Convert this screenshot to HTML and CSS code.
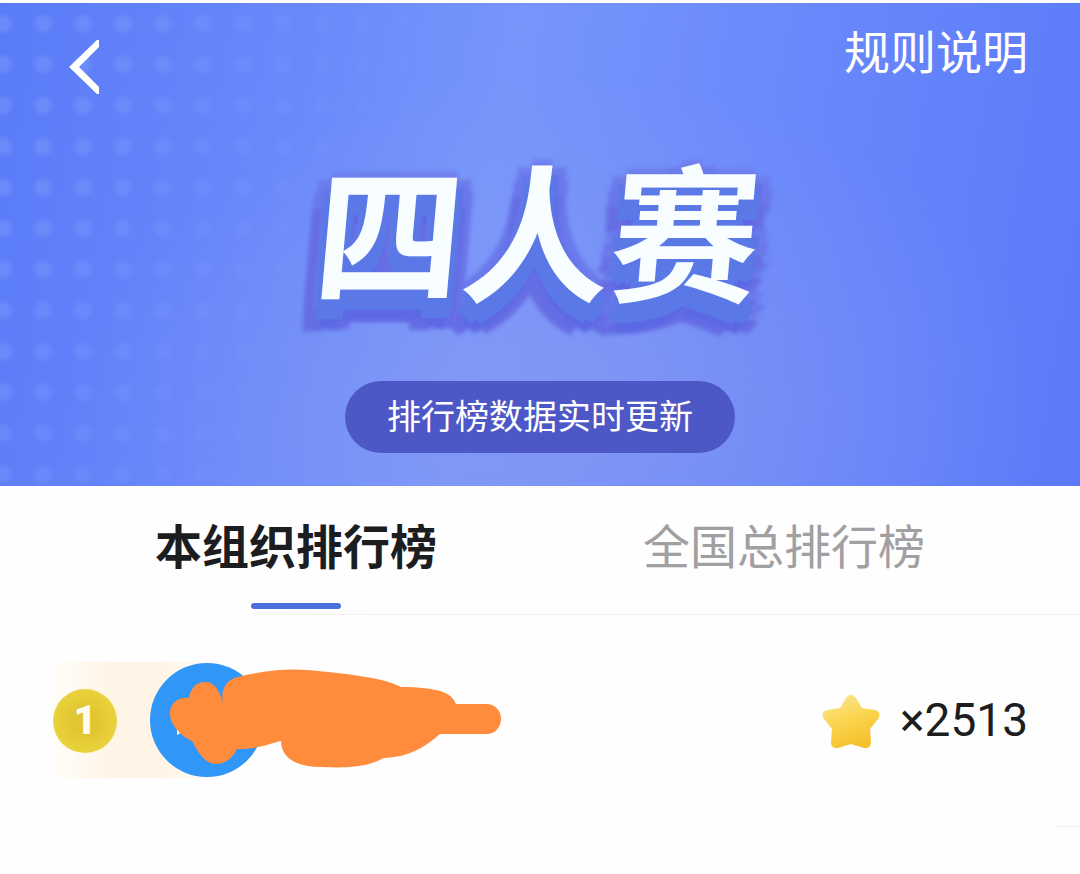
FILE: index.html
```
<!DOCTYPE html>
<html lang="zh-CN">
<head>
  <meta charset="UTF-8">
  <meta name="viewport" content="width=device-width, initial-scale=1">
  <title>四人赛</title>
  <link rel="stylesheet" href="styles.css">
</head>
<body>
  <header class="hero">
    <div class="dots"></div>
    <div class="topbar">
      <button class="back" type="button" aria-label="返回">
        <svg width="32" height="56" viewBox="0 0 32 56"><path d="M31 1v7L11 28l20 20v7h-2L1 28 29 1z" fill="#fff"/></svg>
      </button>
      <a class="rules" href="#">规则说明</a>
    </div>
    <h1 class="title">四人赛</h1>
    <p class="notice">排行榜数据实时更新</p>
  </header>

  <nav class="tabs">
    <button class="tab active" type="button">本组织排行榜</button>
    <button class="tab" type="button">全国总排行榜</button>
  </nav>

  <main>
    <div class="row">
      <div class="user">
        <span class="medal">1</span>
        <svg class="avatar" width="352" height="116" viewBox="150 662 352 116">
          <circle cx="207" cy="720" r="57" fill="#3096f8"/>
          <path d="M177 727l5 5-5 3z" fill="#fff"/>
          <path d="M170 712C171 702 179 697 189 698C191 686 198 682 205 682C214 682 219 689 223 703C220 691 226 679 238 677C262 671 285 668 307 670C340 673 383 677 401 687C420 687 432 689 440 691C450 694 454 699 456 704H486C506 704 506 734 486 734H440C423 749 407 757 384 758C365 768 345 768 320 767C299 767 281 759 281 741C269 744 258 749 237 749C233 757 227 764 215 764C204 763 198 752 192 741C181 736 169 724 170 712Z" fill="#ff8c3d"/>
        </svg>
      </div>
      <div class="score">
        <svg width="60" height="60" viewBox="0 0 60 60">
          <defs>
            <linearGradient id="star" x1="0" y1="0" x2="0.4" y2="1">
              <stop offset="0.1" stop-color="#fbe58c"/>
              <stop offset="0.55" stop-color="#fbd550"/>
              <stop offset="1" stop-color="#f6c12e"/>
            </linearGradient>
          </defs>
          <path d="M24 8q5-7 10 0l6 10 13 2q7 2 3 9l-8 10 1 13q0 7-7 6l-13-4-13 4q-7 1-7-6l1-13-8-10q-4-7 3-9l13-2z" fill="url(#star)"/>
        </svg>
        <span>×2513</span>
      </div>
    </div>
  </main>
</body>
</html>
```
FILE: styles.css
```
* {
  box-sizing: border-box;
}
body {
  margin: 0;
  background: #fefefe;
  color: #1c1d21;
  font-family: Roboto, "Noto Sans CJK SC", sans-serif;
}
button {
  padding: 0;
  border: none;
  background: none;
  font-family: inherit;
  cursor: pointer;
}

/* header */
.hero {
  position: relative;
  display: flex;
  flex-direction: column;
  align-items: center;
  margin-top: 3px;
  padding-bottom: 33px;
  background:
    radial-gradient(ellipse 45% 70% at 52% 85%, rgba(140, 155, 240, 0.6), rgba(140, 155, 240, 0)),
    linear-gradient(100deg, #5a7bf8 0%, #6686fa 22%, #7696fc 45%, #6a89fb 68%, #5a7af9 100%);
}
.dots {
  position: absolute;
  inset: 0;
  width: 420px;
  background: radial-gradient(circle at 50% 50%, rgba(130, 160, 255, 0.4) 5px, rgba(130, 160, 255, 0) 12px) -17px 0 / 40px 41px;
  -webkit-mask-image: linear-gradient(110deg, #000 15%, transparent 85%);
  mask-image: linear-gradient(110deg, #000 15%, transparent 85%);
}
.topbar {
  position: relative;
  display: flex;
  justify-content: space-between;
  align-items: flex-start;
  width: 100%;
  padding: 17px 52px 0 68px;
}
.back {
  margin-top: 19px;
  line-height: 0;
}
.rules {
  color: #fff;
  font-size: 46px;
  line-height: 66px;
  text-decoration: none;
}
.title {
  position: relative;
  margin: 46px 0 0;
  padding-right: 6px;
  color: #f8fdff;
  font-size: 148px;
  font-weight: 700;
  line-height: 200px;
  transform: skewX(-5deg);
  text-shadow:
    0 6px 0 #5b79e6,
    2px 12px 0 #5b79e6,
    -5px 20px 0 #5b79e6,
    5px 20px 0 #5b79e6,
    8px 10px 2px #5f74e6,
    -8px 10px 2px #6378e8,
    0 30px 4px #5c68e4,
    -16px 32px 4px #666ee4,
    12px 30px 4px #666ee4,
    -16px 16px 4px #6b78ea,
    17px 14px 4px #6b78ea,
    -14px 2px 4px #6c7cec,
    15px 2px 4px #6c7cec,
    0 -6px 4px #7080ee;
}
.notice {
  margin: 40px 0 0;
  padding: 1px 42px 0;
  border-radius: 36px;
  background: #4d58c6;
  color: #fff;
  font-size: 34px;
  line-height: 71px;
}

/* tabs */
.tabs {
  display: flex;
  padding: 0 52px;
  background: linear-gradient(90deg, transparent 20%, #f0f0f0 35%) bottom / 100% 1px no-repeat;
}
.tab {
  display: flex;
  flex: 1;
  flex-direction: column;
  align-items: center;
  padding: 29px 0 6px;
  color: #a0a0a2;
  font-size: 47px;
  line-height: 66px;
}
.tab::after {
  content: "";
  width: 90px;
  height: 6px;
  margin-top: 22px;
  border-radius: 3px;
}
.tab.active {
  color: #1c1d21;
  font-weight: 700;
}
.tab.active::after {
  background: #4a70dc;
}

/* ranking */
.row {
  display: flex;
  justify-content: space-between;
  align-items: center;
  padding: 47px 52px 49px;
  background: linear-gradient(#f0f0f0, #f0f0f0) right bottom / 24px 1px no-repeat;
}
.user {
  display: flex;
  align-items: center;
  background: linear-gradient(90deg, #fffdf9, #fff5e6 60px, #fff5e6 110px, transparent 170px);
}
.medal {
  width: 64px;
  height: 64px;
  margin: 2px 33px 0 1px;
  border-radius: 50%;
  background: radial-gradient(circle, #e2c631 30%, #e6cd38 50%, #eed945);
  color: #fffdf0;
  font-size: 40px;
  font-weight: 900;
  line-height: 64px;
  text-align: center;
}
.avatar {
  display: block;
}
.score {
  display: flex;
  align-items: center;
  gap: 18px;
  font-size: 46px;
  line-height: 54px;
}
```
